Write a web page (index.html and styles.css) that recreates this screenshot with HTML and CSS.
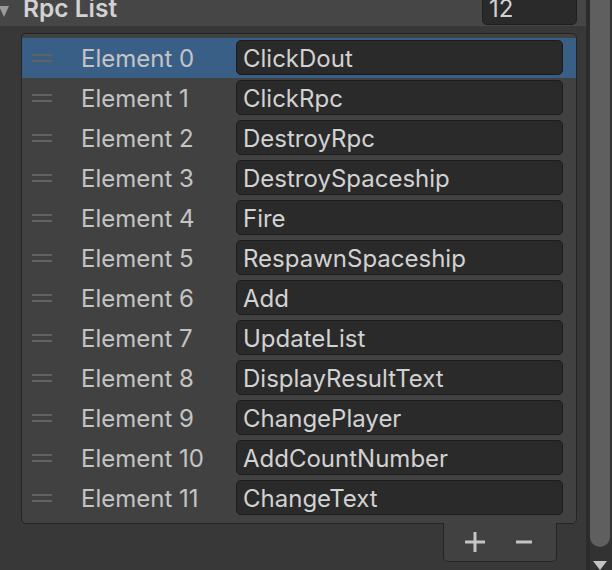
FILE: index.html
```html
<!DOCTYPE html>
<html>
<head>
<meta charset="utf-8">
<link rel="stylesheet" href="styles.css">
</head>
<body>
<div class="page">
  <div class="main">
    <div class="header">
      <span class="fold"></span>
      <span class="title">Rpc List</span>
      <div class="count">12</div>
    </div>
    <div class="list-wrap">
      <div class="list">
        <div class="row selected"><span class="handle"></span><span class="label">Element 0</span><div class="field">ClickDout</div></div>
        <div class="row"><span class="handle"></span><span class="label">Element 1</span><div class="field">ClickRpc</div></div>
        <div class="row"><span class="handle"></span><span class="label">Element 2</span><div class="field">DestroyRpc</div></div>
        <div class="row"><span class="handle"></span><span class="label">Element 3</span><div class="field">DestroySpaceship</div></div>
        <div class="row"><span class="handle"></span><span class="label">Element 4</span><div class="field">Fire</div></div>
        <div class="row"><span class="handle"></span><span class="label">Element 5</span><div class="field">RespawnSpaceship</div></div>
        <div class="row"><span class="handle"></span><span class="label">Element 6</span><div class="field">Add</div></div>
        <div class="row"><span class="handle"></span><span class="label">Element 7</span><div class="field">UpdateList</div></div>
        <div class="row"><span class="handle"></span><span class="label">Element 8</span><div class="field">DisplayResultText</div></div>
        <div class="row"><span class="handle"></span><span class="label">Element 9</span><div class="field">ChangePlayer</div></div>
        <div class="row"><span class="handle"></span><span class="label">Element 10</span><div class="field">AddCountNumber</div></div>
        <div class="row"><span class="handle"></span><span class="label">Element 11</span><div class="field">ChangeText</div></div>
      </div>
      <div class="footer">
        <svg class="btn" width="20" height="20" viewBox="0 0 20 20"><path d="M10 0V20M0 10H20" stroke="#c4c4c4" stroke-width="3" fill="none"/></svg>
        <svg class="btn" width="16" height="20" viewBox="0 0 16 20"><path d="M0 10H16" stroke="#c4c4c4" stroke-width="3" fill="none"/></svg>
      </div>
    </div>
  </div>
  <div class="scrollbar">
    <div class="thumb"></div>
    <div class="arrow"></div>
  </div>
</div>
</body>
</html>
```

FILE: styles.css
```css
html, body {
  margin: 0;
  padding: 0;
  background: #383838;
  overflow: hidden;
}
body {
  width: 612px;
  height: 570px;
  font-family: Inter, "Noto Sans", sans-serif;
  color: #c4c4c4;
}
.page {
  display: flex;
  height: 570px;
}
.main {
  width: 586px;
  display: flex;
  flex-direction: column;
}
.header {
  height: 26px;
  background: #464646;
  display: flex;
  align-items: flex-end;
  flex-shrink: 0;
}
.fold {
  width: 0;
  height: 0;
  border-left: 5px solid transparent;
  border-right: 5px solid transparent;
  border-top: 11px solid #9a9a9a;
  margin: 0 14px 9px -1px;
  align-self: flex-end;
}
.title {
  font-size: 24.5px;
  font-weight: 600;
  color: #d2d2d2;
  line-height: 26px;
  height: 26px;
  position: relative;
  top: -5px;
}
.count {
  margin-left: auto;
  margin-right: 9px;
  margin-bottom: 1px;
  width: 95px;
  height: 31px;
  box-sizing: border-box;
  background: #2a2a2a;
  border: 1px solid #1f1f1f;
  border-radius: 0 0 5px 5px;
  padding-left: 6px;
  font-size: 24px;
  line-height: 28px;
  color: #d2d2d2;
  flex-shrink: 0;
}
.list-wrap {
  padding: 7px 9px 0 21px;
  display: flex;
  flex-direction: column;
}
.list {
  background: #414141;
  border: 1px solid #242424;
  border-radius: 5px;
  padding: 4px 0 5px 0;
}
.row {
  height: 40px;
  display: flex;
  align-items: flex-start;
}
.row.selected {
  background: #3a5f87;
}
.handle {
  width: 20px;
  height: 8px;
  margin: 16px 0 0 10px;
  box-sizing: border-box;
  border-top: 2px solid #626262;
  border-bottom: 2px solid #626262;
  flex-shrink: 0;
}
.label {
  margin-left: 29px;
  width: 155px;
  font-size: 24px;
  line-height: 42px;
  color: #c4c4c4;
  flex-shrink: 0;
}
.field {
  margin-top: 2px;
  width: 327px;
  height: 35px;
  box-sizing: border-box;
  background: #2a2a2a;
  border: 1px solid #1c1c1c;
  border-radius: 5px;
  padding-left: 6px;
  font-size: 24px;
  line-height: 35px;
  color: #d2d2d2;
}
.footer {
  align-self: flex-end;
  margin-right: 20px;
  margin-top: -1px;
  width: 114px;
  height: 39px;
  box-sizing: border-box;
  background: #414141;
  border: 1px solid #242424;
  border-top: none;
  border-radius: 0 0 5px 5px;
  display: flex;
  align-items: center;
  padding-left: 21px;
  gap: 31px;
}
.scrollbar {
  width: 26px;
  background: #323232;
  display: flex;
  flex-direction: column;
  align-items: flex-start;
  border-left: 4px solid #2c2c2c;
  box-sizing: border-box;
}
.thumb {
  width: 20px;
  height: 549px;
  background: #5f5f5f;
  border-radius: 0 0 10px 10px;
}
.arrow {
  margin: 14px 0 0 3px;
  width: 0;
  height: 0;
  border-left: 7px solid transparent;
  border-right: 7px solid transparent;
  border-top: 9px solid #c4c4c4;
}
```
